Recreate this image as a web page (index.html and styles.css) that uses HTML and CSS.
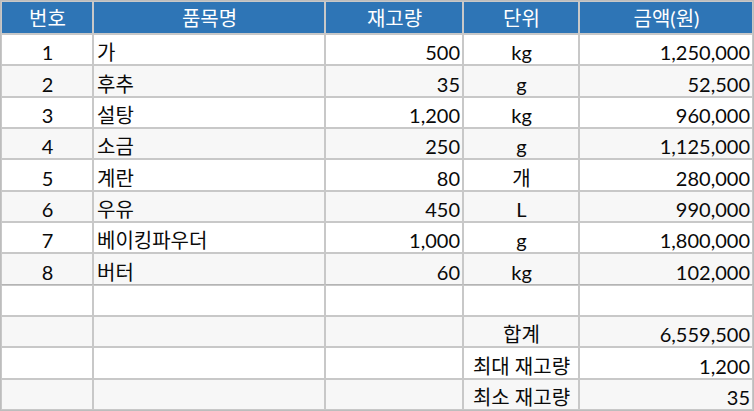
FILE: index.html
```html
<!DOCTYPE html>
<html lang="ko">
<head>
<meta charset="utf-8">
<title>재고 현황</title>
<link rel="stylesheet" href="styles.css">
</head>
<body>
<div class="sheet">
  <div class="row head">
    <div class="c">번호</div><div class="c">품목명</div><div class="c">재고량</div><div class="c">단위</div><div class="c">금액(원)</div>
  </div>
  <div class="row odd"><div class="c">1</div><div class="l">가</div><div class="r">500</div><div class="c">kg</div><div class="r">1,250,000</div></div>
  <div class="row even"><div class="c">2</div><div class="l">후추</div><div class="r">35</div><div class="c">g</div><div class="r">52,500</div></div>
  <div class="row odd"><div class="c">3</div><div class="l">설탕</div><div class="r">1,200</div><div class="c">kg</div><div class="r">960,000</div></div>
  <div class="row even"><div class="c">4</div><div class="l">소금</div><div class="r">250</div><div class="c">g</div><div class="r">1,125,000</div></div>
  <div class="row odd"><div class="c">5</div><div class="l">계란</div><div class="r">80</div><div class="c">개</div><div class="r">280,000</div></div>
  <div class="row even"><div class="c">6</div><div class="l">우유</div><div class="r">450</div><div class="c">L</div><div class="r">990,000</div></div>
  <div class="row odd"><div class="c">7</div><div class="l">베이킹파우더</div><div class="r">1,000</div><div class="c">g</div><div class="r">1,800,000</div></div>
  <div class="row even sep"><div class="c">8</div><div class="l">버터</div><div class="r">60</div><div class="c">kg</div><div class="r">102,000</div></div>
  <div class="row odd"><div></div><div></div><div></div><div></div><div></div></div>
  <div class="row even"><div></div><div></div><div></div><div class="c">합계</div><div class="r">6,559,500</div></div>
  <div class="row odd"><div></div><div></div><div></div><div class="c">최대 재고량</div><div class="r">1,200</div></div>
  <div class="row even"><div></div><div></div><div></div><div class="c">최소 재고량</div><div class="r">35</div></div>
</div>
</body>
</html>
```

FILE: styles.css
```css
html, body {
  margin: 0;
  padding: 0;
  background: #ffffff;
}

.sheet {
  width: 754px;
  height: 411px;
  box-sizing: border-box;
  border: 1px solid #bdbdbd;
  display: flex;
  flex-direction: column;
  font-family: Lato, "Noto Sans CJK KR", sans-serif;
  font-size: 20px;
  color: #0a0a0a;
}

.row {
  display: grid;
  grid-template-columns: 92px 232px 138px 116px 174px;
  flex: 1 1 0;
  min-height: 0;
}

.row > div {
  box-sizing: border-box;
  border: 1px solid #c8c8c8;
  display: flex;
  align-items: flex-end;
  padding: 0 2px 0 3px;
  white-space: nowrap;
  overflow: hidden;
  line-height: 1.2;
}

.head {
  flex: 0 0 33px;
  background: #2e75b6;
  color: #ffffff;
}

.head > div {
  align-items: center;
}

.odd { background: #ffffff; }
.even { background: #f7f7f7; }

.sep > div { border-bottom-color: #b4b4b4; }

.c { justify-content: center; }
.l { justify-content: flex-start; }
.r { justify-content: flex-end; }
```
